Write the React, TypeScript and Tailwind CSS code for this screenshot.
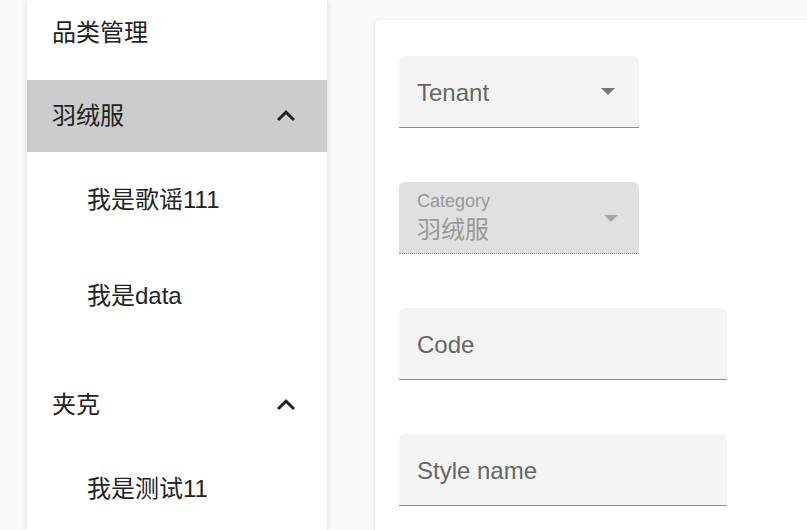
import React from "react";

const font = { fontFamily: '"Liberation Sans", "Noto Sans CJK SC", Arial, sans-serif' };

function Chevron() {
  return (
    <svg width="36" height="36" viewBox="0 0 24 24" className="shrink-0">
      <path d="M12 8l-6 6 1.41 1.41L12 10.83l4.59 4.58L18 14z" fill="#222" />
    </svg>
  );
}

function Caret({ color }: { color: string }) {
  return (
    <svg width="14" height="7" viewBox="0 0 14 7" className="shrink-0">
      <path d="M0 0h14L7 7z" fill={color} />
    </svg>
  );
}

function Group({ title, active }: { title: string; active?: boolean }) {
  return (
    <div
      className={`h-[72px] flex items-center justify-between pl-[25px] pr-[23px] ${active ? "bg-[#cccccc]" : ""}`}
    >
      <span className="text-[24px] leading-[32px] text-[#222]">{title}</span>
      <Chevron />
    </div>
  );
}

function Sub({ title }: { title: string }) {
  return (
    <div className="h-[96px] flex items-center pl-[60px]">
      <span className="text-[24px] leading-[32px] text-[#222]">{title}</span>
    </div>
  );
}

export default function App() {
  return (
    <div className="h-[530px] w-[807px] overflow-hidden bg-[#f9f9f9] flex" style={font}>
      <div className="ml-[27px] w-[300px] shrink-0 bg-white shadow-[0_0_6px_rgba(0,0,0,0.12)] overflow-hidden">
        <div className="h-[80px] pt-[17px] pl-[25px]">
          <span className="text-[24px] leading-[32px] text-[#222]">品类管理</span>
        </div>
        <Group title="羽绒服" active />
        <Sub title="我是歌谣111" />
        <Sub title="我是data" />
        <div className="h-[25px]" />
        <Group title="夹克" />
        <Sub title="我是测试11" />
      </div>
      <div className="ml-[48px] mt-[20px] w-[600px] shrink-0 h-[560px] bg-white rounded-[6px] shadow-[0_1px_4px_rgba(0,0,0,0.12)] pt-[36px] pl-[24px] flex flex-col gap-[54px]">
        <div className="w-[240px] h-[72px] shrink-0 bg-[#f4f4f4] rounded-t-[6px] border-b border-[#8c8c8c] flex items-center justify-between pl-[18px] pr-[24px]">
          <span className="text-[24px] leading-[32px] text-[#666] pt-[2px]">Tenant</span>
          <Caret color="#767676" />
        </div>
        <div className="w-[240px] h-[72px] shrink-0 bg-[#e0e0e0] rounded-t-[6px] border-b border-dotted border-[#8c8c8c] flex items-start justify-between pl-[18px] pr-[21px]">
          <div className="flex flex-col pt-[9px]">
            <span className="text-[18px] leading-[20px] text-[#999]">Category</span>
            <span className="text-[24px] leading-[32px] text-[#999] mt-[3px]">羽绒服</span>
          </div>
          <div className="pt-[33px]">
            <Caret color="#a6a6a6" />
          </div>
        </div>
        <div className="w-[328px] h-[72px] shrink-0 bg-[#f4f4f4] rounded-t-[6px] border-b border-[#8c8c8c] flex items-center pl-[18px]">
          <span className="text-[24px] leading-[32px] text-[#666] pt-[3px]">Code</span>
        </div>
        <div className="w-[328px] h-[72px] shrink-0 bg-[#f4f4f4] rounded-t-[6px] border-b border-[#8c8c8c] flex items-center pl-[18px]">
          <span className="text-[24px] leading-[32px] text-[#666] pt-[3px]">Style name</span>
        </div>
      </div>
    </div>
  );
}
